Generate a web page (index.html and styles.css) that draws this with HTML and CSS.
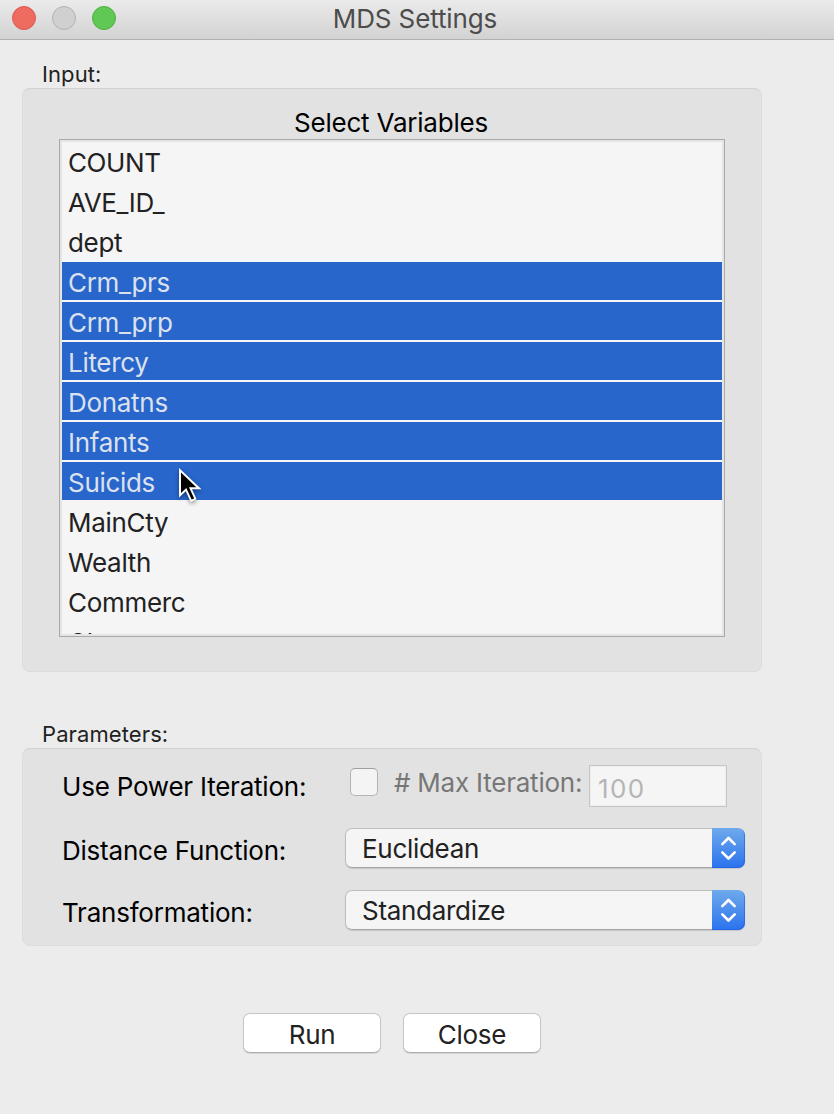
FILE: index.html
```
<!DOCTYPE html>
<html lang="en">
<head>
<meta charset="utf-8">
<title>MDS Settings</title>
<link rel="stylesheet" href="styles.css">
</head>
<body>
<div class="window">
  <header class="titlebar">
    <div class="lights"><span class="light red"></span><span class="light gray"></span><span class="light green"></span></div>
    <h1 class="title"><span>MDS Settings</span></h1>
  </header>
  <main class="content">
    <div class="legend legend-input">Input:</div>
    <section class="group group-input">
      <h2 class="heading"><span>Select Variables</span></h2>
      <ul class="list">
        <li class="item count">COUNT</li>
        <li class="item ave">AVE_ID_</li>
        <li class="item">dept</li>
        <li class="item selected">Crm_prs</li>
        <li class="item selected">Crm_prp</li>
        <li class="item selected">Litercy</li>
        <li class="item selected">Donatns</li>
        <li class="item selected">Infants</li>
        <li class="item selected">Suicids</li>
        <li class="item">MainCty</li>
        <li class="item">Wealth</li>
        <li class="item">Commerc</li>
        <li class="item">Clergy</li>
      </ul>
      <svg class="cursor" width="32" height="44" viewBox="0 0 32 44">
        <path d="M4 4V33.5L10.8 27.2L15.7 38L21.6 35.3L17 25.2H26.5Z" fill="#fff"/>
        <path d="M6 8.5V29L11.3 24L16.6 35.6L19.2 34.4L14 23.2H21.3Z" fill="#000"/>
      </svg>
    </section>
    <div class="legend legend-params">Parameters:</div>
    <section class="group group-params">
      <div class="row row-power">
        <label class="label power-label">Use Power Iteration:</label>
        <span class="checkbox"></span>
        <label class="max-label">#&nbsp;Max Iteration:</label>
        <div class="field">100</div>
      </div>
      <div class="row row-distance">
        <label class="label distance-label">Distance Function:</label>
        <div class="select"><span class="value euclid">Euclidean</span><span class="arrows"><svg width="33" height="40" viewBox="0 0 33 40"><path d="M10.3 16.2L16.5 10L22.7 16.2M10.3 24.3L16.5 30.5L22.7 24.3"/></svg></span></div>
      </div>
      <div class="row row-transform">
        <label class="label transform-label">Transformation:</label>
        <div class="select"><span class="value standard">Standardize</span><span class="arrows"><svg width="33" height="40" viewBox="0 0 33 40"><path d="M10.3 16.2L16.5 10L22.7 16.2M10.3 24.3L16.5 30.5L22.7 24.3"/></svg></span></div>
      </div>
    </section>
    <div class="actions">
      <div class="button">Run</div>
      <div class="button">Close</div>
    </div>
  </main>
</div>
</body>
</html>
```
FILE: styles.css
```
* { box-sizing: border-box; }
body { margin: 0; background: #ececec; }
.window {
  width: 834px;
  height: 1114px;
  overflow: hidden;
  background: #ececec;
  color: #222;
  font-family: Inter, "Liberation Sans", sans-serif;
  font-size: 26px;
  letter-spacing: -0.3px;
  white-space: nowrap;
}
.titlebar {
  display: grid;
  grid-template-columns: 128px 1fr 133px;
  height: 40px;
  background: linear-gradient(#ebebeb, #d2d2d2);
  border-bottom: 1px solid #b1b1b1;
}
.lights { display: flex; gap: 16px; padding: 6px 0 0 12px; }
.light { width: 24px; height: 24px; border-radius: 50%; border: 1px solid; }
.red { background: #ee6b60; border-color: #d9584e; }
.gray { background: #d0d0d0; border-color: #b3b3b3; }
.green { background: #60c955; border-color: #4fae40; }
.title {
  margin: 0;
  padding-left: 1px;
  font-size: 26px;
  font-weight: 400;
  letter-spacing: -0.12px;
  line-height: 37px;
  text-align: center;
  color: #4c4c4c;
}
.legend {
  padding-left: 42px;
  font-size: 22px;
  letter-spacing: 0.1px;
  line-height: 28px;
}
.legend-input { padding-top: 20px; }
.legend-params { margin-top: 48px; }
.group {
  width: 740px;
  margin-left: 22px;
  background: #e2e2e2;
  border: 1px solid #dcdcdc;
  border-top-color: #d0d0d0;
  border-radius: 8px;
}
.group-input { position: relative; height: 584px; padding: 0 36px; }
.heading {
  margin: 0;
  padding: 15px 2px 0 0;
  height: 50px;
  font-size: 26px;
  font-weight: 400;
  letter-spacing: -0.22px;
  line-height: 38px;
  text-align: center;
  color: #000;
}
.list {
  width: 666px;
  height: 498px;
  margin: 0;
  padding: 2px;
  overflow: hidden;
  list-style: none;
  background: #f5f5f5;
  border: 1px solid #a9a9a9;
  outline: 2px solid #e4e4e4;
  outline-offset: -3px;
}
.item {
  height: 38px;
  margin-bottom: 2px;
  padding-left: 6px;
  line-height: 41px;
}
.count, .ave { letter-spacing: -0.4px; }
.selected { background: #2866cb; color: #dce1ee; }
.cursor {
  position: absolute;
  left: 152px;
  top: 375px;
  filter: drop-shadow(0 2px 2px rgba(0, 0, 0, 0.4));
}
.group-params { height: 198px; padding: 16px 16px 15px 39px; }
.row { display: flex; height: 42px; }
.label { width: 283px; color: #000; letter-spacing: -0.22px; }
.power-label { line-height: 43px; }
.checkbox {
  width: 28px;
  height: 28px;
  margin: 3px 16px 0 5px;
  background: #f4f4f4;
  border: 1px solid #b3b3b3;
  border-top-color: #9f9f9f;
  border-radius: 5px;
}
.max-label { width: 195px; line-height: 35px; letter-spacing: -0.22px; color: #777; }
.field {
  width: 138px;
  height: 42px;
  padding-left: 8px;
  border: 1px solid #c5c5c5;
  box-shadow: inset 0 0 0 1px #ececec;
  background: #f5f5f5;
  line-height: 45px;
  letter-spacing: 1.4px;
  color: #b5b5b5;
}
.row-distance { margin-top: 21px; height: 40px; }
.row-transform { margin-top: 22px; height: 40px; }
.distance-label, .transform-label { line-height: 45px; }
.select {
  display: flex;
  width: 400px;
  height: 40px;
  border-radius: 7px;
  background: #f5f5f5;
  box-shadow: 0 1px 1px rgba(0, 0, 0, 0.12);
}
.value {
  width: 367px;
  padding-left: 16px;
  border: 1px solid #bdbdbd;
  border-bottom-color: #a5a5a5;
  border-right: 0;
  border-radius: 7px 0 0 7px;
  line-height: 39px;
}
.arrows {
  width: 33px;
  height: 40px;
  border-radius: 0 7px 7px 0;
  background: linear-gradient(#6faaec, #2b72ee);
  box-shadow: inset -1px -1px 0 rgba(32, 92, 226, 0.6);
}
.arrows svg { display: block; fill: none; stroke: #fff; stroke-width: 2.6; stroke-linecap: round; stroke-linejoin: round; }
.actions { display: flex; gap: 22px; padding: 67px 0 0 243px; }
.button {
  width: 138px;
  height: 40px;
  background: #fff;
  border: 1px solid #c6c6c6;
  border-bottom-color: #adadad;
  border-radius: 7px;
  box-shadow: 0 1px 1px rgba(0, 0, 0, 0.1);
  line-height: 41px;
  text-align: center;
}
```
